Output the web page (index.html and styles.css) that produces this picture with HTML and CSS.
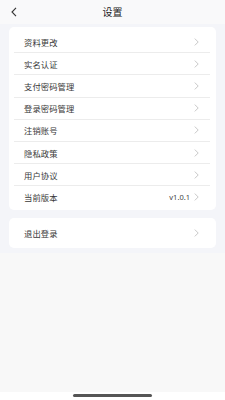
FILE: index.html
```html
<!DOCTYPE html>
<html>
<head>
<meta charset="utf-8">
<link rel="stylesheet" href="styles.css">
</head>
<body>
<div class="page">
  <div class="header">
    <svg class="back" width="8" height="10" viewBox="0 0 8 10"><path d="M6 0.8 L2 5 L6 9.2" fill="none" stroke="#333" stroke-width="1.1"/></svg>
    <div class="title">设置</div>
  </div>
  <div class="content">
    <div class="card">
      <div class="row"><span class="label">资料更改</span><span class="right"><svg class="arrow" viewBox="0 0 5 8"><path d="M0.8 0.6 L4.2 4 L0.8 7.4" fill="none" stroke="#b0b0b0" stroke-width="0.7"/></svg></span></div>
      <div class="row"><span class="label">实名认证</span><span class="right"><svg class="arrow" viewBox="0 0 5 8"><path d="M0.8 0.6 L4.2 4 L0.8 7.4" fill="none" stroke="#b0b0b0" stroke-width="0.7"/></svg></span></div>
      <div class="row"><span class="label">支付密码管理</span><span class="right"><svg class="arrow" viewBox="0 0 5 8"><path d="M0.8 0.6 L4.2 4 L0.8 7.4" fill="none" stroke="#b0b0b0" stroke-width="0.7"/></svg></span></div>
      <div class="row"><span class="label">登录密码管理</span><span class="right"><svg class="arrow" viewBox="0 0 5 8"><path d="M0.8 0.6 L4.2 4 L0.8 7.4" fill="none" stroke="#b0b0b0" stroke-width="0.7"/></svg></span></div>
      <div class="row"><span class="label">注销账号</span><span class="right"><svg class="arrow" viewBox="0 0 5 8"><path d="M0.8 0.6 L4.2 4 L0.8 7.4" fill="none" stroke="#b0b0b0" stroke-width="0.7"/></svg></span></div>
      <div class="row"><span class="label">隐私政策</span><span class="right"><svg class="arrow" viewBox="0 0 5 8"><path d="M0.8 0.6 L4.2 4 L0.8 7.4" fill="none" stroke="#b0b0b0" stroke-width="0.7"/></svg></span></div>
      <div class="row"><span class="label">用户协议</span><span class="right"><svg class="arrow" viewBox="0 0 5 8"><path d="M0.8 0.6 L4.2 4 L0.8 7.4" fill="none" stroke="#b0b0b0" stroke-width="0.7"/></svg></span></div>
      <div class="row last"><span class="label">当前版本</span><span class="right"><span class="version">v1.0.1</span><svg class="arrow" viewBox="0 0 5 8"><path d="M0.8 0.6 L4.2 4 L0.8 7.4" fill="none" stroke="#b0b0b0" stroke-width="0.7"/></svg></span></div>
    </div>
    <div class="card single">
      <div class="row last tall"><span class="label">退出登录</span><span class="right"><svg class="arrow" viewBox="0 0 5 8"><path d="M0.8 0.6 L4.2 4 L0.8 7.4" fill="none" stroke="#b0b0b0" stroke-width="0.7"/></svg></span></div>
    </div>
  </div>
  <div class="filler"></div>
  <div class="home"><div class="indicator"></div></div>
</div>
</body>
</html>
```
FILE: styles.css
```css
* { box-sizing: border-box; }
html, body { margin: 0; padding: 0; }
body {
  width: 225px;
  height: 400px;
  font-family: "Noto Sans CJK SC", "Noto Sans", sans-serif;
  color: #333;
  background: #f8f8f8;
}
.page {
  display: flex;
  flex-direction: column;
  height: 400px;
}
.header {
  height: 24px;
  display: flex;
  align-items: center;
  justify-content: center;
  position: relative;
  background: #f9f9fa;
}
.back {
  position: absolute;
  left: 10px;
  top: 7px;
}
.title {
  font-size: 10px;
  color: #222;
  line-height: 1;
}
.content {
  background: #f4f5f9;
  padding: 3px 9px 5px;
  display: flex;
  flex-direction: column;
  gap: 8px;
}
.card {
  background: #fff;
  border-radius: 5px;
  padding: 4px 6px 1px 5px;
}
.card.single {
  padding: 0 6px 0 5px;
}
.row {
  height: 22.2px;
  display: flex;
  align-items: center;
  justify-content: space-between;
  border-bottom: 0.6px solid #ececec;
  padding: 0 11px 0 10px;
}
.row.last { border-bottom: none; }
.row.tall { height: 30px; }
.label {
  font-size: 8.3px;
  color: #383838;
  letter-spacing: 0.1px;
}
.right {
  display: flex;
  align-items: center;
  gap: 4px;
}
.version {
  font-family: "Noto Sans", sans-serif;
  font-size: 7.5px;
  color: #444;
}
.arrow {
  width: 5px;
  height: 8px;
}
.filler { flex: 1; background: #f8f8f8; }
.home {
  height: 8px;
  background: #fff;
  display: flex;
  justify-content: center;
  padding-top: 2px;
}
.indicator {
  width: 79px;
  height: 2.5px;
  border-radius: 2px;
  background: #555;
}
```
